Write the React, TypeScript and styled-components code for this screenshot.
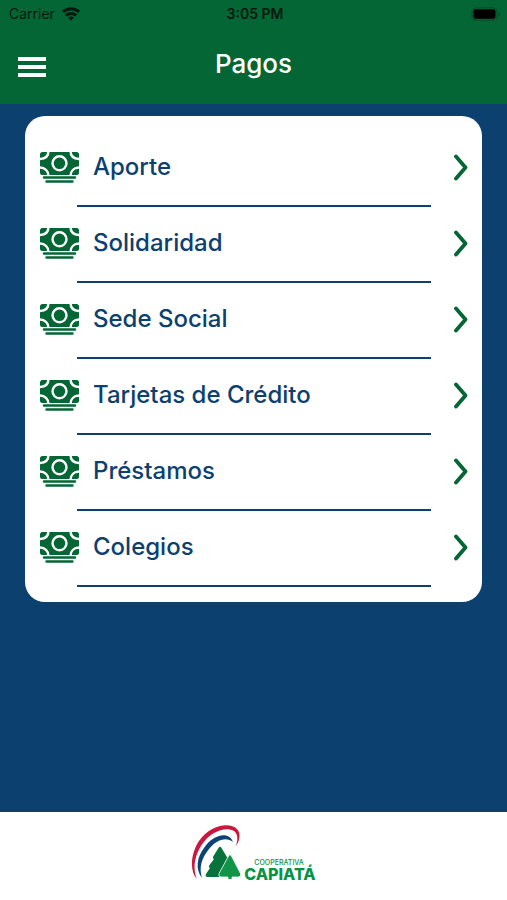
import React from "react";
import styled, { createGlobalStyle } from "styled-components";

const green = "#036634";
const blue = "#0b406f";

const GlobalStyle = createGlobalStyle`
  * { box-sizing: border-box; }
  body { margin: 0; background: ${blue}; font-family: Inter, "Liberation Sans", sans-serif; }
`;

const Page = styled.div`
  min-height: 100vh;
  display: flex;
  flex-direction: column;
  background: ${blue};
`;

const Header = styled.header`
  background: ${green};
  padding-bottom: 16px;
`;

const StatusBar = styled.div`
  display: grid;
  grid-template-columns: 1fr auto 1fr;
  align-items: center;
  height: 28px;
  padding: 0 6px 0 9px;
  color: #03190e;
  font-size: 14px;
  line-height: 20px;
`;

const Carrier = styled.div`
  display: flex;
  align-items: center;
  gap: 7px;
`;

const Clock = styled.time`
  font-weight: 600;
`;

const Battery = styled.svg`
  justify-self: end;
`;

const NavBar = styled.div`
  display: grid;
  grid-template-columns: 28px 1fr 28px;
  align-items: center;
  min-height: 60px;
  padding: 0 18px;
`;

const MenuButton = styled.button`
  display: flex;
  flex-direction: column;
  gap: 4px;
  width: 28px;
  padding: 18px 0 0;
  border: 0;
  background: none;
  cursor: pointer;
`;

const MenuBar = styled.span`
  width: 28px;
  height: 4px;
  background: #fff;
`;

const Title = styled.h1`
  margin: 0;
  padding-top: 12px;
  color: #fff;
  font-size: 26px;
  font-weight: 500;
  line-height: 32px;
  text-align: center;
`;

const Main = styled.main`
  flex: 1;
  padding: 12px 25px;
`;

const Card = styled.ul`
  margin: 0;
  padding: 15px 14px;
  list-style: none;
  background: #fff;
  border-radius: 20px;
`;

const Item = styled.li`
  height: 76px;
  display: flex;
  flex-direction: column;
  &::after {
    content: "";
    height: 2px;
    margin: 0 37px 0 38px;
    background: ${blue};
  }
`;

const RowButton = styled.button`
  flex: 1;
  display: flex;
  align-items: center;
  width: 100%;
  padding: 0 0 2px 1px;
  border: 0;
  background: none;
  color: ${blue};
  font-family: inherit;
  font-size: 24px;
  font-weight: 500;
  line-height: 32px;
  text-align: left;
  cursor: pointer;
`;

const Label = styled.span`
  flex: 1;
  margin-left: 14px;
`;

const Footer = styled.footer`
  display: flex;
  justify-content: center;
  align-items: center;
  min-height: 88px;
  background: #fff;
`;

const Brand = styled.div`
  display: flex;
  align-items: flex-end;
  padding-bottom: 6px;
`;

const BrandName = styled.div`
  display: flex;
  flex-direction: column;
  margin-left: 2px;
  color: #079344;
`;

const BrandTop = styled.span`
  padding-left: 10px;
  font-size: 7px;
  font-weight: 500;
  line-height: 8px;
`;

const BrandBottom = styled.span`
  font-size: 16px;
  font-weight: 800;
  line-height: 14px;
`;

const WifiIcon = () => (
  <svg width="18" height="14" viewBox="0 0 18 14" aria-hidden="true">
    <g fill="none" stroke="#03190e" strokeWidth="3">
      <path d="M1 4.800C5.600.600 12.400.600 17 4.800" />
      <path d="M4 8.500C6.800 5.800 11.200 5.800 14 8.500" />
    </g>
    <path d="M6 10.500C7.700 9 10.300 9 12 10.500L9 13.600Z" fill="#03190e" />
  </svg>
);

const BatteryIcon = () => (
  <Battery width="30" height="14" viewBox="0 0 30 14" aria-hidden="true">
    <rect x="1" y=".8" width="25" height="12.400" rx="3.500" fill="none" stroke="#034d28" />
    <rect x="2.500" y="2.300" width="22" height="9.400" rx="2" fill="#000" />
    <path d="M27.500 5V9.400Q29 8.700 29 7.200T27.500 5" fill="#034d28" />
  </Battery>
);

const MoneyIcon = () => (
  <svg width="39" height="32" viewBox="0 0 39 32" aria-hidden="true">
    <rect x="0" y="1" width="39" height="23" rx="2.500" fill={green} />
    <g fill="none" stroke="#fff" strokeWidth="2.400">
      <circle cx="19.500" cy="12.300" r="7" />
      <path d="M8.500 0C8.500 5 5 8 -1 8M30.500 0C30.500 5 34 8 40 8M-1 16.500C5 16.500 8.500 20 8.500 25M40 16.500C34 16.500 30.500 20 30.500 25" />
    </g>
    <path d="M4 26.500H35M6.500 30.500H32.500" stroke={green} strokeWidth="2.400" strokeLinecap="round" />
  </svg>
);

const Chevron = () => (
  <svg width="15" height="28" viewBox="0 0 15 28" aria-hidden="true">
    <path d="M3 3.500L12.500 14.500L3 25.500" fill="none" stroke={green} strokeWidth="3.800" strokeLinecap="round" strokeLinejoin="round" />
  </svg>
);

const LogoMark = () => (
  <svg width="51" height="56" viewBox="0 0 51 56" aria-hidden="true">
    <path d="M6 54C-2 46 0 28 8 16C18 1 38-4 46 4C50 8 49 15 45 21C47 14 47 9 43 6C34 1 20 7 12 18C4 29 1 43 6 54Z" fill="#c8183c" />
    <path d="M11 53C4 44 6 32 13 23C21 10 38 5 42 17C35 11 25 15 18 24C10 34 8 43 11 53Z" fill="#0b4377" />
    <path d="M27.500 23Q29 20.500 30.500 23L46 49Q47 52 44 52H17Q13.500 52 15 49L19 43Q17 42 18.500 40L23 34Q21 33 22.500 31Z" fill="#08723a" />
    <path d="M37.500 31Q39 28.500 40.500 31L49.500 48.500Q50.500 52 47.500 52H41V54.500H37V52H30Q27 52 28 48.500Z" fill="#109447" stroke="#fff" strokeWidth=".8" />
  </svg>
);

const payments = ["Aporte", "Solidaridad", "Sede Social", "Tarjetas de Crédito", "Préstamos", "Colegios"];

export default function App() {
  return (
    <Page>
      <GlobalStyle />
      <Header>
        <StatusBar>
          <Carrier>
            Carrier
            <WifiIcon />
          </Carrier>
          <Clock>3:05 PM</Clock>
          <BatteryIcon />
        </StatusBar>
        <NavBar>
          <MenuButton type="button" aria-label="Menú">
            <MenuBar />
            <MenuBar />
            <MenuBar />
          </MenuButton>
          <Title>Pagos</Title>
        </NavBar>
      </Header>
      <Main>
        <Card>
          {payments.map((name) => (
            <Item key={name}>
              <RowButton type="button">
                <MoneyIcon />
                <Label>{name}</Label>
                <Chevron />
              </RowButton>
            </Item>
          ))}
        </Card>
      </Main>
      <Footer>
        <Brand>
          <LogoMark />
          <BrandName>
            <BrandTop>COOPERATIVA</BrandTop>
            <BrandBottom>CAPIATÁ</BrandBottom>
          </BrandName>
        </Brand>
      </Footer>
    </Page>
  );
}
